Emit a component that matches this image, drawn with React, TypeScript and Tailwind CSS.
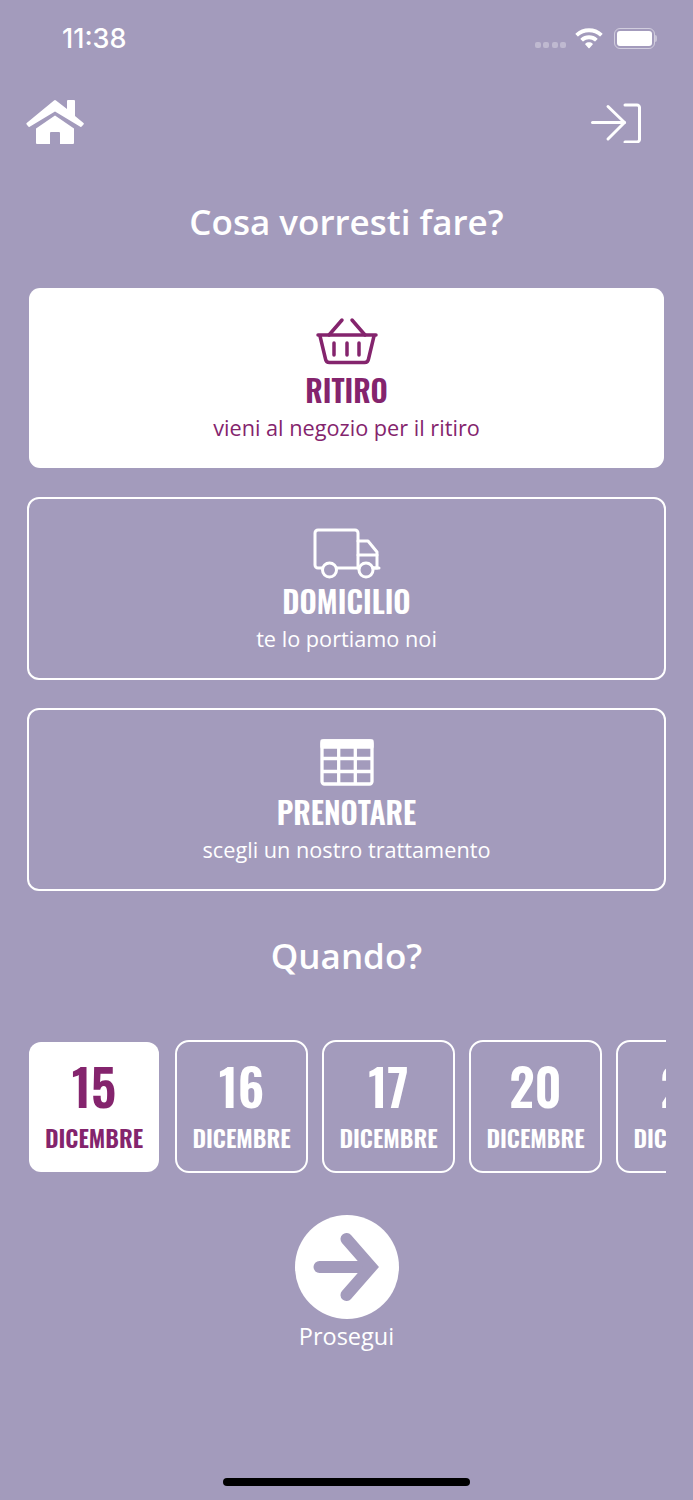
const PLUM = "#84246d";
const BG = "#a39bbc";

function HomeIcon() {
  return (
    <svg width="59" height="46" viewBox="0 0 59 46" fill="#fff">
      <path d="M28 1.500a1.500 1.500 0 0 1 2 0L41 10V2a1 1 0 0 1 1-1h6a1 1 0 0 1 1 1v15l8.500 7a1 1 0 0 1 .2 1.300l-2 2.300a1 1 0 0 1-1.400.2L29 12.500 3.700 27.800a1 1 0 0 1-1.400-.2l-1.800-2.300a1 1 0 0 1 .2-1.300z" />
      <path d="M29 16.500 48 29.500V44a1 1 0 0 1-1 1H34V34a1 1 0 0 0-1-1h-8a1 1 0 0 0-1 1v11H11a1 1 0 0 1-1-1V29.500z" />
    </svg>
  );
}

function LoginIcon() {
  return (
    <svg width="52" height="40" viewBox="0 0 52 40" fill="none" stroke="#fff" strokeWidth="3" strokeLinecap="round" strokeLinejoin="round">
      <path d="M2.500 19.500H34.500" />
      <path d="M18 3.500 34.500 19.500 18 36" />
      <path d="M35 2h12a2.500 2.500 0 0 1 2.500 2.500v32a2.500 2.500 0 0 1-2.500 2.500H35" />
    </svg>
  );
}

function BasketIcon() {
  return (
    <svg width="62" height="50" viewBox="0 0 62 50" fill="none" stroke={PLUM} strokeWidth="3.500" strokeLinecap="round" strokeLinejoin="round">
      <path d="M2 18h58" />
      <path d="M13 18 26 3M49 18 36 3" />
      <path d="M4 19l5.500 23a4 4 0 0 0 4 3.500h35a4 4 0 0 0 4-3.500L58 19" />
      <path d="M18 26v12M31 26v12M43 26v12" />
    </svg>
  );
}

function TruckIcon() {
  return (
    <svg width="68" height="52" viewBox="0 0 68 52" fill="none" stroke="#fff" strokeWidth="3" strokeLinecap="round" strokeLinejoin="round">
      <path d="M9 40H5a3 3 0 0 1-3-3V5a3 3 0 0 1 3-3h37a3 3 0 0 1 3 3v35H24" />
      <path d="M45 13h10l9 11v16h-4" />
      <path d="M45 27h19" />
      <path d="M45 40h1M60 40h6" />
      <circle cx="16.500" cy="42" r="7" />
      <circle cx="53" cy="42" r="7" />
    </svg>
  );
}

function GridIcon() {
  return (
    <svg width="54" height="47" viewBox="0 0 54 47" fill="none" stroke="#fff" strokeWidth="3.300" strokeLinejoin="round">
      <rect x="2" y="2" width="50" height="43" rx="2.500" />
      <path d="M2 2h50v6H2z" fill="#fff" />
      <path d="M2 19.500h50M2 32.500h50M18.700 6v39M35.300 6v39" />
    </svg>
  );
}

function ArrowIcon() {
  return (
    <svg width="68" height="68" viewBox="0 0 68 68" fill="none" stroke={BG} strokeWidth="12" strokeLinecap="round" strokeLinejoin="miter">
      <path d="M6.500 34H55" />
      <path d="M33.500 6 58 34 33.500 62" />
    </svg>
  );
}

function WifiIcon() {
  return (
    <svg width="28" height="21" viewBox="0 0 22 16" fill="#fff">
      <path d="M11 0c4 0 7.700 1.500 10.500 4.100.2.200.2.400 0 .6l-1.500 1.500c-.2.200-.4.200-.6 0A12.300 12.300 0 0 0 11 3a12.300 12.300 0 0 0-8.400 3.200c-.2.200-.4.200-.6 0L.5 4.700c-.2-.2-.2-.4 0-.6C3.300 1.500 7 0 11 0z" />
      <path d="M11 5.500c2.500 0 4.800.9 6.600 2.500.2.200.2.400 0 .6L16 10.200c-.2.200-.4.200-.6 0A6.700 6.700 0 0 0 11 8.500c-1.700 0-3.200.6-4.400 1.700-.2.200-.4.200-.6 0L4.400 8.600c-.2-.2-.2-.4 0-.6C6.200 6.400 8.500 5.500 11 5.500z" />
      <path d="M11 11c1.100 0 2.100.4 2.900 1.100.2.200.2.400 0 .6l-2.600 2.900c-.2.200-.4.200-.6 0l-2.600-2.900c-.2-.2-.2-.4 0-.6.800-.7 1.800-1.100 2.900-1.100z" />
    </svg>
  );
}

function StatusBar() {
  return (
    <div className="flex items-center justify-between h-[76px] pl-[62px] pr-[36px] text-white">
      <span className="text-[27px] font-medium font-['Inter',sans-serif] leading-none">11:38</span>
      <div className="flex items-center">
        <div className="flex gap-[2.500px] mt-[14px] mr-[9px] opacity-30">
          <span className="w-[6px] h-[6px] rounded-[2px] bg-white" />
          <span className="w-[6px] h-[6px] rounded-[2px] bg-white" />
          <span className="w-[6px] h-[6px] rounded-[2px] bg-white" />
          <span className="w-[6px] h-[6px] rounded-[2px] bg-white" />
        </div>
        <div className="mr-[11px] flex">
          <WifiIcon />
        </div>
        <div className="w-[41px] h-[21px] border border-white/50 rounded-[6px] p-[2px]">
          <div className="w-full h-full bg-white rounded-[3px]" />
        </div>
        <div className="w-[2px] h-[7px] bg-white/40 rounded-r-[2px]" />
      </div>
    </div>
  );
}

type Service = {
  title: string;
  sub: string;
  icon: React.ReactNode;
  active?: boolean;
};

function ServiceCard({ title, sub, icon, active }: Service) {
  return (
    <div
      className={
        active
          ? "h-[180px] mx-[2px] mb-[1px] rounded-[11px] bg-white text-[#84246d] flex flex-col items-center pt-[29px]"
          : "h-[183px] border-2 border-white rounded-[12px] text-white flex flex-col items-center pt-[29px]"
      }
    >
      <div className="h-[50px]">{icon}</div>
      <div className="mt-[5px] font-['Oswald','Liberation_Sans_Narrow','Liberation_Sans',sans-serif] font-semibold text-[30px] leading-[36px]">
        {title}
      </div>
      <div className="mt-[6px] text-[21.700px] leading-[28px]">{sub}</div>
    </div>
  );
}

const days = ["15", "16", "17", "20", "21"];

function DateStrip() {
  return (
    <div className="flex gap-[14px] ml-[28px] w-[638px] overflow-hidden items-center">
      {days.map((d, i) => (
        <div
          key={d}
          className={
            i === 0
              ? "w-[130px] h-[130px] ml-[1px] mr-[2px] shrink-0 rounded-[12px] bg-white text-[#84246d] flex flex-col items-center"
              : "w-[133px] h-[133px] shrink-0 rounded-[14px] border-2 border-white text-white flex flex-col items-center"
          }
        >
          <div className="font-['Oswald','Liberation_Sans_Narrow','Liberation_Sans',sans-serif] font-semibold text-[50px] leading-[60px] mt-[13px]">
            {d}
          </div>
          <div className="font-['Oswald','Liberation_Sans_Narrow','Liberation_Sans',sans-serif] font-semibold text-[23.700px] leading-[30px] mt-[8px]">
            DICEMBRE
          </div>
        </div>
      ))}
    </div>
  );
}

export default function App() {
  return (
    <div className="w-[693px] h-[1500px] bg-[#a39bbc] relative overflow-hidden font-['Open_Sans',sans-serif]">
      <StatusBar />

      <div className="flex items-start justify-between pl-[26px] pr-[51px] pt-[23px] h-[123px]">
        <HomeIcon />
        <div className="mt-[4px]">
          <LoginIcon />
        </div>
      </div>

      <h1 className="text-white text-center text-[35px] leading-[46px] font-semibold">Cosa vorresti fare?</h1>

      <div className="px-[27px] mt-[43px] flex flex-col gap-[28px]">
        <ServiceCard title="RITIRO" sub="vieni al negozio per il ritiro" icon={<BasketIcon />} active />
        <ServiceCard title="DOMICILIO" sub="te lo portiamo noi" icon={<TruckIcon />} />
        <ServiceCard title="PRENOTARE" sub="scegli un nostro trattamento" icon={<GridIcon />} />
      </div>

      <h2 className="text-white text-center text-[35px] leading-[46px] font-semibold mt-[42px]">Quando?</h2>

      <div className="mt-[61px]">
        <DateStrip />
      </div>

      <div className="flex flex-col items-center mt-[42px]">
        <div className="w-[104px] h-[104px] rounded-full bg-white flex items-center justify-center">
          <ArrowIcon />
        </div>
        <div className="text-white text-[23.500px] leading-[30px] mt-[2px]">Prosegui</div>
      </div>

      <div className="absolute bottom-[14px] left-[223px] w-[247px] h-[8px] rounded-full bg-black" />
    </div>
  );
}
